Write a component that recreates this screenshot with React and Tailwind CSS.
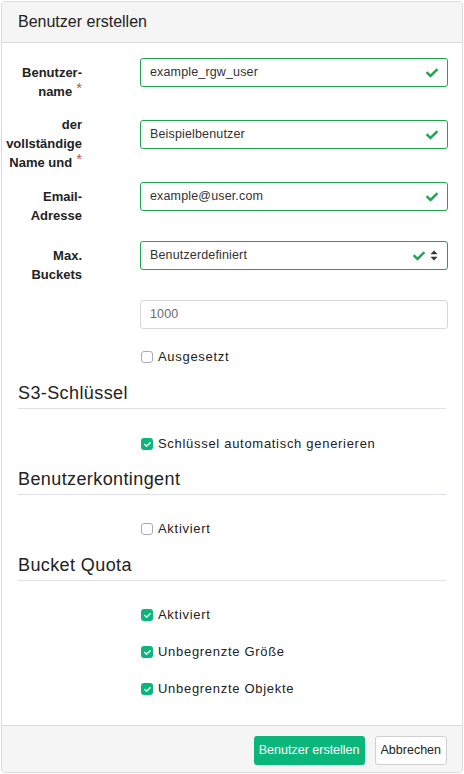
const font = { fontFamily: '"Liberation Sans", Arial, sans-serif' }

function Check({ className = '' }) {
  return (
    <svg viewBox="0 0 512 512" className={className} fill="currentColor">
      <path d="M173.9 439.4 7.5 273c-10-10-10-26.2 0-36.2l36.2-36.2c10-10 26.2-10 36.2 0L192 312.7 432.1 72.6c10-10 26.2-10 36.2 0l36.2 36.2c10 10 10 26.2 0 36.2L210.1 439.4c-10 10-26.2 10-36.2 0z" />
    </svg>
  )
}

function Sort() {
  return (
    <svg viewBox="0 0 10 14" className="h-[11px] w-[8px]" fill="#333">
      <path d="M5 0.5 9.5 5.5H0.5z" />
      <path d="M5 13.5 9.5 8.5H0.5z" />
    </svg>
  )
}

function Req() {
  return <span className="relative -top-[3px] ml-[4px] text-[15px] font-normal leading-[10px] text-[#c0504d]">*</span>
}

function Field({ value, select, plain }) {
  return (
    <div
      className={
        'flex h-[29px] flex-1 items-center rounded-[3px] border pl-[9px] pr-[9px] text-[12.5px] tracking-[0.15px] ' +
        (plain ? 'border-[#d5d8de] text-[#6b6b6b]' : 'border-[#1da64f] text-[#333]')
      }
    >
      <span className="flex-1">{value}</span>
      {!plain && <Check className="h-[12px] w-[12px] text-[#1da64f]" />}
      {select && (
        <span className="ml-[5px] flex items-center">
          <Sort />
        </span>
      )}
    </div>
  )
}

function Row({ h, label, pt, children }) {
  return (
    <div className={'flex items-start ' + h}>
      <div className={'w-[80px] shrink-0 text-right text-[13px] font-bold leading-[19px] text-[#222] ' + pt}>{label}</div>
      <div className="ml-[58px] mr-[14px] flex flex-1">{children}</div>
    </div>
  )
}

function Box({ checked, label, className = '' }) {
  return (
    <div className={'ml-[139px] flex h-[20px] items-center ' + className}>
      {checked ? (
        <span className="flex h-[12px] w-[12px] items-center justify-center rounded-[3px] bg-[#0bb67b]">
          <Check className="h-[7px] w-[7px] text-white" />
        </span>
      ) : (
        <span className="h-[12px] w-[12px] rounded-[3px] border border-[#a7adb8] bg-white" />
      )}
      <span className="ml-[5px] text-[13px] tracking-[0.7px] text-[#222]">{label}</span>
    </div>
  )
}

function Section({ title, className = '' }) {
  return (
    <div className={'mx-[16px] border-b border-[#dfe0e6] pb-[3px] ' + className}>
      <h2 className="text-[18px] leading-[24px] tracking-[0.4px] text-[#222]">{title}</h2>
    </div>
  )
}

export default function App() {
  return (
    <div className="bg-white p-px" style={font}>
      <div className="flex h-[772px] w-[462px] flex-col overflow-hidden rounded-[4px] border border-[#dcdcdc]">
        <div className="flex h-[41px] items-center border-b border-[#dcdcdc] bg-[#f5f5f5] px-[16px]">
          <h1 className="text-[16px] text-[#222]">Benutzer erstellen</h1>
        </div>

        <div className="flex flex-1 flex-col pt-[15px]">
          <Row h="h-[62px]" pt="pt-[5px]" label={<>Benutzer-name<Req /></>}>
            <Field value="example_rgw_user" />
          </Row>
          <Row h="h-[62px]" pt="-mt-[5px]" label={<>der vollständige Name und<Req /></>}>
            <Field value="Beispielbenutzer" />
          </Row>
          <Row h="h-[59px]" pt="pt-[5px]" label="Email-Adresse">
            <Field value="example@user.com" />
          </Row>
          <Row h="h-[59px]" pt="pt-[5px]" label="Max. Buckets">
            <Field value="Benutzerdefiniert" select />
          </Row>
          <Row h="h-[29px]" pt="" label="">
            <Field value="1000" plain />
          </Row>

          <Box label="Ausgesetzt" className="mt-[18px]" />

          <Section title="S3-Schlüssel" className="mt-[14px]" />
          <Box checked label="Schlüssel automatisch generieren" className="mt-[25px]" />

          <Section title="Benutzerkontingent" className="mt-[13px]" />
          <Box label="Aktiviert" className="mt-[24px]" />

          <Section title="Bucket Quota" className="mt-[14px]" />
          <Box checked label="Aktiviert" className="mt-[24px]" />
          <Box checked label="Unbegrenzte Größe" className="mt-[17px]" />
          <Box checked label="Unbegrenzte Objekte" className="mt-[17px]" />
        </div>

        <div className="flex h-[47px] items-start justify-end gap-[10px] border-t border-[#dcdcdc] bg-[#f5f5f5] px-[15px] pt-[10px]">
          <button className="h-[29px] rounded-[3px] bg-[#0bb67b] px-[5px] text-[12.5px] text-white">
            Benutzer erstellen
          </button>
          <button className="h-[29px] rounded-[3px] border border-[#d0d0d0] bg-white px-[5px] text-[12.5px] text-[#222]">
            Abbrechen
          </button>
        </div>
      </div>
    </div>
  )
}
